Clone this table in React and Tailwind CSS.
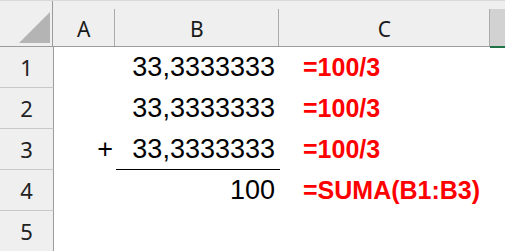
import React from 'react';

const rows = [
    { n: 1, value: '33,3333333', formula: '=100/3' },
    { n: 2, value: '33,3333333', formula: '=100/3' },
    { n: 3, value: '33,3333333', formula: '=100/3', plus: true, underline: true },
    { n: 4, value: '100', formula: '=SUMA(B1:B3)' },
    { n: 5 },
];

const ColumnHeader = ({ label, width }) => (
    <div className={`${width} flex flex-col`}>
        <div className="mt-2 flex-1 border-r border-[#ababab] flex items-center justify-center pt-1 text-[21px] text-[#1a1a1a]">
            {label}
        </div>
    </div>
);

const App = () => {
    return (
        <div className="w-[505px] h-[251px] bg-white overflow-hidden font-['Noto_Sans',sans-serif]">
            {/* column headers */}
            <div className="h-[47px] flex bg-[#efefef] border-t border-[#d9d9d9]">
                <div className="w-[54px] flex items-end border-r border-b border-[#9c9c9c] pb-[3px] pl-[19px]">
                    <svg width="31" height="31" viewBox="0 0 31 31">
                        <polygon points="31,0 31,31 0,31" fill="#b4b4b4" />
                    </svg>
                </div>
                <div className="flex flex-1 border-b border-[#9c9c9c]">
                    <ColumnHeader label="A" width="w-[62px]" />
                    <ColumnHeader label="B" width="w-[164px]" />
                    <ColumnHeader label="C" width="w-[211px]" />
                </div>
                <div className="flex flex-col w-[15px]">
                    <div className="mt-2 flex-1 bg-[#d2d2d2] border-b-2 border-[#217346] -mb-px" />
                </div>
            </div>

            {/* cell rows */}
            {rows.map((r) => (
                <div key={r.n} className="h-[41px] flex">
                    <div className="w-[54px] flex items-center justify-center bg-[#efefef] border-r border-r-[#9c9c9c] border-b border-b-[#c8c8c8] text-[22px] text-[#222]">
                        {r.n}
                    </div>
                    <div className="w-[62px] flex items-center justify-end pr-[3px] text-[27px] text-black font-['Liberation_Sans',sans-serif]">
                        {r.plus ? '+' : ''}
                    </div>
                    <div
                        className={`w-[164px] flex items-center justify-end pr-[5px] text-[27px] text-black font-['Liberation_Sans',sans-serif] ${
                            r.underline ? 'border-b border-black' : ''
                        }`}
                    >
                        {r.value}
                    </div>
                    <div className="flex-1 flex items-center pl-[23px] text-[25px] font-bold text-[#ff0000] font-['Liberation_Sans',sans-serif]">
                        {r.formula}
                    </div>
                </div>
            ))}
        </div>
    );
};

export default App;
